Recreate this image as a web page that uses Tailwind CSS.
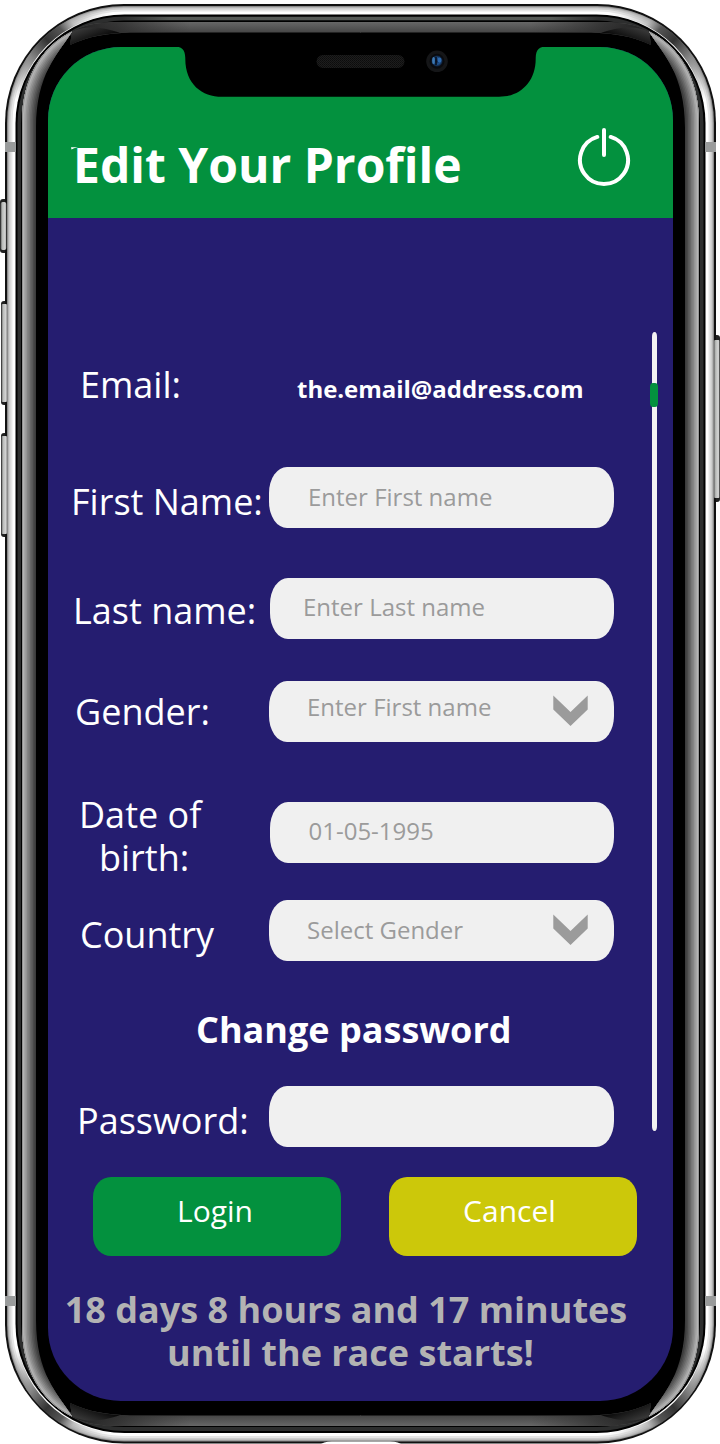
<!DOCTYPE html>
<html lang="en">
<head>
<meta charset="utf-8">
<title>Edit Your Profile</title>
<script src="https://cdn.jsdelivr.net/npm/@tailwindcss/browser@4"></script>
</head>
<body class="bg-white">
<div class="relative w-[720px] h-[1444px] overflow-hidden font-['Open_Sans',sans-serif] text-white">
  <!-- phone body -->
  <svg class="absolute inset-0" width="720" height="1444" viewBox="0 0 720 1444" fill="none">
    <defs>
      <linearGradient id="top" gradientUnits="userSpaceOnUse" x1="0" y1="21" x2="0" y2="33"><stop offset="0" stop-color="#6a6a6a"/><stop offset="1" stop-color="#444"/></linearGradient>
      <linearGradient id="topfade" gradientUnits="userSpaceOnUse" x1="70" y1="0" x2="190" y2="0"><stop offset="0" stop-color="#202020"/><stop offset=".4" stop-color="#282828" stop-opacity=".75"/><stop offset="1" stop-color="#303030" stop-opacity="0"/></linearGradient>
      <linearGradient id="shade" gradientUnits="userSpaceOnUse" x1="84" y1="28" x2="90" y2="44"><stop offset="0" stop-color="#363636"/><stop offset="1" stop-color="#050505"/></linearGradient>
      <linearGradient id="rim" gradientUnits="userSpaceOnUse" x1="122" y1="0" x2="599" y2="0"><stop offset="0" stop-color="#555956" stop-opacity="0"/><stop offset=".1" stop-color="#555956"/><stop offset=".9" stop-color="#555956"/><stop offset="1" stop-color="#555956" stop-opacity="0"/></linearGradient>
      <linearGradient id="smear" gradientUnits="userSpaceOnUse" x1="12" y1="95" x2="110" y2="10"><stop offset="0" stop-color="#999" stop-opacity="0"/><stop offset=".3" stop-color="#888"/><stop offset=".48" stop-color="#333"/><stop offset=".62" stop-color="#555"/><stop offset=".72" stop-color="#aaa" stop-opacity=".7"/><stop offset="1" stop-color="#ccc" stop-opacity="0"/></linearGradient>
      <linearGradient id="key" x1="0" y1="0" x2="1" y2="0"><stop offset="0" stop-color="#666"/><stop offset=".3" stop-color="#b9bbb9"/><stop offset=".8" stop-color="#d6d6d6"/><stop offset="1" stop-color="#888"/></linearGradient>
      <radialGradient id="lens"><stop offset="0" stop-color="#0b1c3c"/><stop offset=".55" stop-color="#1f5492"/><stop offset="1" stop-color="#0a1220"/></radialGradient>
      <pattern id="mesh" width="2" height="2" patternUnits="userSpaceOnUse"><rect width="2" height="2" fill="#1d1d1d"/><rect width="1" height="1" fill="#0c0c0c"/><rect x="1" y="1" width="1" height="1" fill="#101010"/></pattern>
      <clipPath id="crescent"><path d="M22 725V122C22 78 42 46 72 31.500C58 54 36 74 36 128V725Z"/></clipPath>
      <path id="edge" d="M22 725V122C22 78 42 46 72 31.500"/>
      <g id="corner">
        <path d="M11.500 124C11.500 60 60 10.500 124 10.500" stroke="url(#smear)" stroke-width="8"/>
        <path d="M72 31.500C86 23 104 22 130 22H361V32.500H130C108 33.500 88 36 70 45Z" fill="url(#top)"/>
        <path d="M72 31.500C86 23 104 22 130 22H190V32.500H130C108 33.500 88 36 70 45Z" fill="url(#topfade)"/>
        <path d="M72 31.500C84 26 100 26 120 32.800C104 34 88 36 70 45Z" fill="url(#shade)"/>
        <g clip-path="url(#crescent)">
          <use href="#edge" stroke="#3c3c3c" stroke-width="30"/>
          <use href="#edge" stroke="#4a4a4a" stroke-width="25"/>
          <use href="#edge" stroke="#585858" stroke-width="22"/>
          <use href="#edge" stroke="#676767" stroke-width="19"/>
          <use href="#edge" stroke="#767676" stroke-width="16"/>
          <use href="#edge" stroke="#858585" stroke-width="13"/>
          <use href="#edge" stroke="#949494" stroke-width="10"/>
          <use href="#edge" stroke="#a6a6a6" stroke-width="7"/>
          <use href="#edge" stroke="#b4b4b4" stroke-width="4"/>
          <use href="#edge" stroke="#8a8a8a" stroke-width="1.500"/>
        </g>
        <rect x="5" y="142" width="11" height="10" fill="#999b9b"/>
      </g>
    </defs>
    <!-- key shadows -->
    <rect x="0" y="199" width="9" height="54" rx="3" fill="#222"/>
    <rect x="1" y="301" width="9" height="104" rx="3" fill="#222"/>
    <rect x="1" y="433" width="9" height="104" rx="3" fill="#222"/>
    <rect x="711" y="335" width="9" height="167" rx="3" fill="#222"/>
    <!-- chassis rings -->
    <rect x="5" y="4" width="711" height="1439.500" rx="119" fill="#111"/>
    <rect x="7" y="6" width="707" height="1435.500" rx="117" fill="#8b8b8b"/>
    <rect x="8" y="7" width="705" height="1433.500" rx="116" fill="#b5b5b5"/>
    <rect x="9" y="8" width="703" height="1431.500" rx="115" fill="#cecece"/>
    <rect x="10.500" y="9.500" width="700" height="1428.500" rx="113.500" fill="#e6e6e6"/>
    <rect x="12.500" y="11.500" width="696" height="1424.500" rx="111.500" fill="#fff"/>
    <rect x="15.500" y="14.500" width="690" height="1418.500" rx="109" fill="#000"/>
    <rect x="17.500" y="16.500" width="686" height="1414.500" rx="107" fill="#2d2e2e"/>
    <rect x="21" y="20.500" width="679" height="1406.500" rx="103" fill="#000"/>
    <path d="M122 17H599V20H122Z" fill="url(#rim)"/>
    <use href="#corner"/>
    <use href="#corner" transform="matrix(-1 0 0 1 721 0)"/>
    <use href="#corner" transform="matrix(1 0 0 -1 0 1448)"/>
    <use href="#corner" transform="matrix(-1 0 0 -1 721 1448)"/>
    <!-- hardware keys -->
    <rect x=".7" y="202" width="5.600" height="48" rx="2" fill="url(#key)"/>
    <rect x="1.500" y="304" width="5.500" height="98" rx="1" fill="url(#key)"/>
    <rect x="1.500" y="436" width="5.500" height="98" rx="1" fill="url(#key)"/>
    <rect x="714" y="340" width="5.500" height="158" rx="1" fill="url(#key)"/>
    <path d="M321 1444C325 1441.500 330 1441.500 336 1441.500H386C392 1441.500 397 1441.500 401 1444Z" fill="#fff"/>
  </svg>

  <!-- screen -->
  <div class="relative ml-[48px] pt-[46.5px] w-[625px]">
    <div class="h-[1354.5px] rounded-[73px] bg-[#251d70] overflow-hidden">
      <header class="flex justify-between items-start h-[171.5px] bg-[#03913e] pl-[25px] pr-[42px]">
        <h1 class="mt-[85.5px] text-[48px] leading-[66px] font-bold whitespace-nowrap">Edit Your Profile</h1>
        <svg class="mt-[80.5px]" width="54" height="60" viewBox="577 127 54 60" fill="none" stroke="#fff" stroke-width="4" stroke-linecap="round"><path d="M597.300 136.950A24 24 0 1 0 610.700 136.950M604 130V155"/></svg>
      </header>

      <main class="flex flex-col text-[36px] leading-[44px]">
        <div class="mt-[144px] h-[105px] flex">
          <div class="w-[216px] pl-[32px] pt-px whitespace-nowrap">Email:</div>
          <div class="pl-[33px] pt-[5px] text-[24px] font-bold whitespace-nowrap tracking-[-0.03px]">the.email@address.com</div>
        </div>
        <div class="h-[111px] flex items-start">
          <label class="w-[221px] shrink-0 pl-[23px] pt-[13px] whitespace-nowrap">First Name:</label>
          <div class="w-[345px] h-[61px] rounded-[18px/26px] bg-[#f0f0f0] pl-[39px] pt-[8px] text-[24px] text-[#9b9b9b]">Enter First name</div>
        </div>
        <div class="h-[103px] flex items-start">
          <label class="w-[222px] shrink-0 pl-[25px] pt-[11px] whitespace-nowrap">Last name:</label>
          <div class="w-[344px] h-[61px] rounded-[18px/26px] bg-[#f0f0f0] pl-[33px] pt-[7px] text-[24px] text-[#9b9b9b]">Enter Last name</div>
        </div>
        <div class="h-[121px] flex items-start">
          <label class="w-[221px] shrink-0 pl-[27px] pt-[9px] whitespace-nowrap">Gender:</label>
          <div class="flex justify-between w-[345px] h-[61px] rounded-[18px/26px] bg-[#f0f0f0] pl-[38px] pr-[26px] pt-[4px] text-[24px] text-[#9b9b9b]">Enter First name
            <svg class="mt-[10px]" width="35" height="32" viewBox="0 0 35 32"><path d="M.3 .5L17.500 17L34.700 .5V14.500L17.500 31L.3 14.500Z" fill="#9b9b9b"/></svg>
          </div>
        </div>
        <div class="h-[98px] flex items-start">
          <label class="w-[222px] shrink-0 pl-[30px] -mt-[9px] leading-[43px] whitespace-nowrap"><span class="block pl-[1px]">Date of</span><span class="block pl-[21px]">birth:</span></label>
          <div class="w-[344px] h-[61px] rounded-[18px/26px] bg-[#f0f0f0] pl-[38.5px] pt-[7px] text-[24px] text-[#9b9b9b]">01-05-1995</div>
        </div>
        <div class="h-[107px] flex items-start">
          <label class="w-[221px] shrink-0 pl-[32px] pt-[13px] whitespace-nowrap">Country</label>
          <div class="flex justify-between w-[345px] h-[61px] rounded-[18px/26px] bg-[#f0f0f0] pl-[38px] pr-[26px] pt-[8px] text-[24px] text-[#9b9b9b]">Select Gender
            <svg class="mt-[6px]" width="35" height="32" viewBox="0 0 35 32"><path d="M.3 .5L17.500 17L34.700 .5V14.500L17.500 31L.3 14.500Z" fill="#9b9b9b"/></svg>
          </div>
        </div>
        <h2 class="h-[79px] pl-[148px] pt-px font-bold whitespace-nowrap">Change password</h2>
        <div class="h-[91px] flex items-start">
          <label class="w-[221px] shrink-0 pl-[29px] pt-[13px] whitespace-nowrap">Password:</label>
          <div class="w-[345px] h-[61px] rounded-[18px/26px] bg-[#f0f0f0]"></div>
        </div>
        <div class="h-[110px] flex items-start pl-[45px] gap-[48px] text-[30px] text-center">
          <button class="w-[248px] h-[79px] rounded-[18px/20px] bg-[#03913e] pb-[12px] pr-[4px]">Login</button>
          <button class="w-[248px] h-[79px] rounded-[18px/20px] bg-[#ccc80a] pb-[12px] pr-[7px]">Cancel</button>
        </div>
        <p class="w-[596px] pt-px text-center font-bold leading-[43px] text-[#b3b3b3] whitespace-nowrap"><span class="block">18 days 8 hours and 17 minutes</span><span class="block pl-[9px]">until the race starts!</span></p>
      </main>
    </div>
  </div>

  <!-- notch, sensors and title tick -->
  <svg class="absolute top-0 left-0" width="720" height="160" viewBox="0 0 720 160">
    <path d="M173 46.500C182 46.500 185 49 185.300 58C185 84 202 96.800 222 96.800H499C520 96.800 536 82 535.700 58C536 49 539 46.500 548 46.500V44H173Z" fill="#000"/>
    <rect x="316.500" y="55" width="88" height="13" rx="6.500" fill="url(#mesh)"/>
    <circle cx="437" cy="61.300" r="10.800" fill="#151618"/><circle cx="437" cy="61.300" r="7.500" fill="#0a0b0e"/>
    <circle cx="437" cy="61" r="5.800" fill="url(#lens)"/><ellipse cx="433.500" cy="60.500" rx="1.300" ry="3.500" fill="#3e78b0"/><ellipse cx="439.500" cy="60" rx="2" ry="2.600" fill="#2d69ac"/><path d="M436 57V65" stroke="#070b16" stroke-width="1.500"/>
    <path d="M71 147.200H78L74 148.200L71.500 149.500Z" fill="#fff"/>
  </svg>
  <!-- scrollbar -->
  <div class="absolute left-[652px] top-[332px] w-[5px] h-[799px] rounded-[2.5px/5px] bg-[#f2f2f2]"></div>
  <div class="absolute left-[650px] top-[383px] w-[8px] h-[24px] rounded-[3px/4px] bg-[#03913e]"></div>
</div>
</body>
</html>
